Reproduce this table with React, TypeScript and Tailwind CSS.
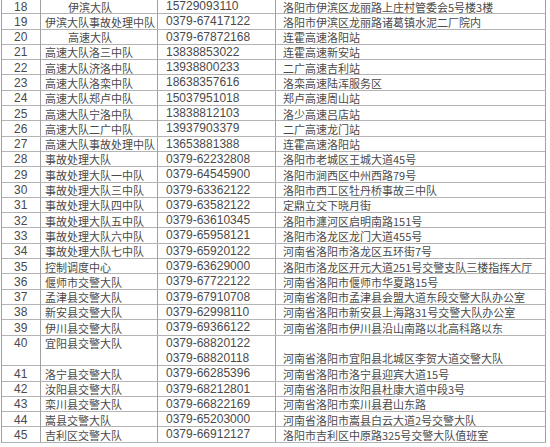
const rows: { no: string; name: string; phone: string[]; addr: string; indent?: boolean }[] = [
  { no: "18", name: "伊滨大队", phone: ["15729093110"], addr: "洛阳市伊滨区龙丽路上庄村管委会5号楼3楼", indent: true },
  { no: "19", name: "伊滨大队事故处理中队", phone: ["0379-67417122"], addr: "洛阳市伊滨区龙丽路诸葛镇水泥二厂院内" },
  { no: "20", name: "高速大队", phone: ["0379-67872168"], addr: "连霍高速洛阳站", indent: true },
  { no: "21", name: "高速大队洛三中队", phone: ["13838853022"], addr: "连霍高速新安站" },
  { no: "22", name: "高速大队济洛中队", phone: ["13938800233"], addr: "二广高速吉利站" },
  { no: "23", name: "高速大队洛栾中队", phone: ["18638357616"], addr: "洛栾高速陆浑服务区" },
  { no: "24", name: "高速大队郑卢中队", phone: ["15037951018"], addr: "郑卢高速周山站" },
  { no: "25", name: "高速大队宁洛中队", phone: ["13838812103"], addr: "洛少高速吕店站" },
  { no: "26", name: "高速大队二广中队", phone: ["13937903379"], addr: "二广高速龙门站" },
  { no: "27", name: "高速大队事故处理中队", phone: ["13653881388"], addr: "连霍高速洛阳站" },
  { no: "28", name: "事故处理大队", phone: ["0379-62232808"], addr: "洛阳市老城区王城大道45号" },
  { no: "29", name: "事故处理大队一中队", phone: ["0379-64545900"], addr: "洛阳市涧西区中州西路79号" },
  { no: "30", name: "事故处理大队三中队", phone: ["0379-63362122"], addr: "洛阳市西工区牡丹桥事故三中队" },
  { no: "31", name: "事故处理大队四中队", phone: ["0379-63582122"], addr: "定鼎立交下晓月街" },
  { no: "32", name: "事故处理大队五中队", phone: ["0379-63610345"], addr: "洛阳市瀍河区启明南路151号" },
  { no: "33", name: "事故处理大队六中队", phone: ["0379-65958121"], addr: "洛阳市洛龙区龙门大道455号" },
  { no: "34", name: "事故处理大队七中队", phone: ["0379-65920122"], addr: "河南省洛阳市洛龙区五环街7号" },
  { no: "35", name: "控制调度中心", phone: ["0379-63629000"], addr: "洛阳市洛龙区开元大道251号交警支队三楼指挥大厅" },
  { no: "36", name: "偃师市交警大队", phone: ["0379-67722122"], addr: "河南省洛阳市偃师市华夏路15号" },
  { no: "37", name: "孟津县交警大队", phone: ["0379-67910708"], addr: "河南省洛阳市孟津县会盟大道东段交警大队办公室" },
  { no: "38", name: "新安县交警大队", phone: ["0379-62998110"], addr: "河南省洛阳市新安县上海路31号交警大队办公室" },
  { no: "39", name: "伊川县交警大队", phone: ["0379-69366122"], addr: "河南省洛阳市伊川县沿山南路以北高科路以东" },
  { no: "40", name: "宜阳县交警大队", phone: ["0379-68820122", "0379-68820118"], addr: "河南省洛阳市宜阳县北城区李贺大道交警大队" },
  { no: "41", name: "洛宁县交警大队", phone: ["0379-66285396"], addr: "河南省洛阳市洛宁县迎宾大道15号" },
  { no: "42", name: "汝阳县交警大队", phone: ["0379-68212801"], addr: "河南省洛阳市汝阳县杜康大道中段3号" },
  { no: "43", name: "栾川县交警大队", phone: ["0379-66822169"], addr: "河南省洛阳市栾川县君山东路" },
  { no: "44", name: "嵩县交警大队", phone: ["0379-65203000"], addr: "河南省洛阳市嵩县白云大道2号交警大队" },
  { no: "45", name: "吉利区交警大队", phone: ["0379-66912127"], addr: "洛阳市吉利区中原路325号交警大队值班室" },
]

export default function App() {
  return (
    <div className="w-[550px] h-[447px] overflow-hidden bg-white">
      <div
        className="-mt-[2px] ml-[1px] w-[545px] border-l border-t border-[#a0a0a0] text-[#4a4a4a]"
        style={{ fontFamily: '"Liberation Sans", "Noto Sans CJK SC", sans-serif' }}
      >
        {rows.map((r) => {
          const tall = r.phone.length > 1
          return (
            <div
              key={r.no}
              className={`grid grid-cols-[39px_117px_118px_270px] border-b border-[#b4b4b4] ${tall ? "h-[30.7px]" : "h-[15.3px]"}`}
            >
              <div className={`border-r border-[#a0a0a0] pl-[12px] text-[12px] leading-[14px] flex ${tall ? "items-start" : "items-center"}`}>
                {r.no}
              </div>
              <div
                className={`border-r border-[#a0a0a0] text-[11px] leading-[14px] whitespace-nowrap flex ${tall ? "items-start" : "items-center"} ${r.indent ? "pl-[27px]" : "pl-[4px]"}`}
                style={{ fontFamily: '"Noto Sans CJK SC", sans-serif' }}
              >
                {r.name}
              </div>
              <div className="border-r border-[#a0a0a0] pl-[8px] text-[12px] leading-[15px] flex flex-col justify-center">
                {r.phone.map((p) => (
                  <span key={p}>{p}</span>
                ))}
              </div>
              <div
                className={`border-r border-[#a0a0a0] pl-[7px] text-[11px] leading-[14px] whitespace-nowrap flex ${tall ? "items-end pb-[1px]" : "items-center"}`}
                style={{ fontFamily: '"Noto Sans CJK SC", sans-serif' }}
              >
                {r.addr}
              </div>
            </div>
          )
        })}
      </div>
    </div>
  )
}
